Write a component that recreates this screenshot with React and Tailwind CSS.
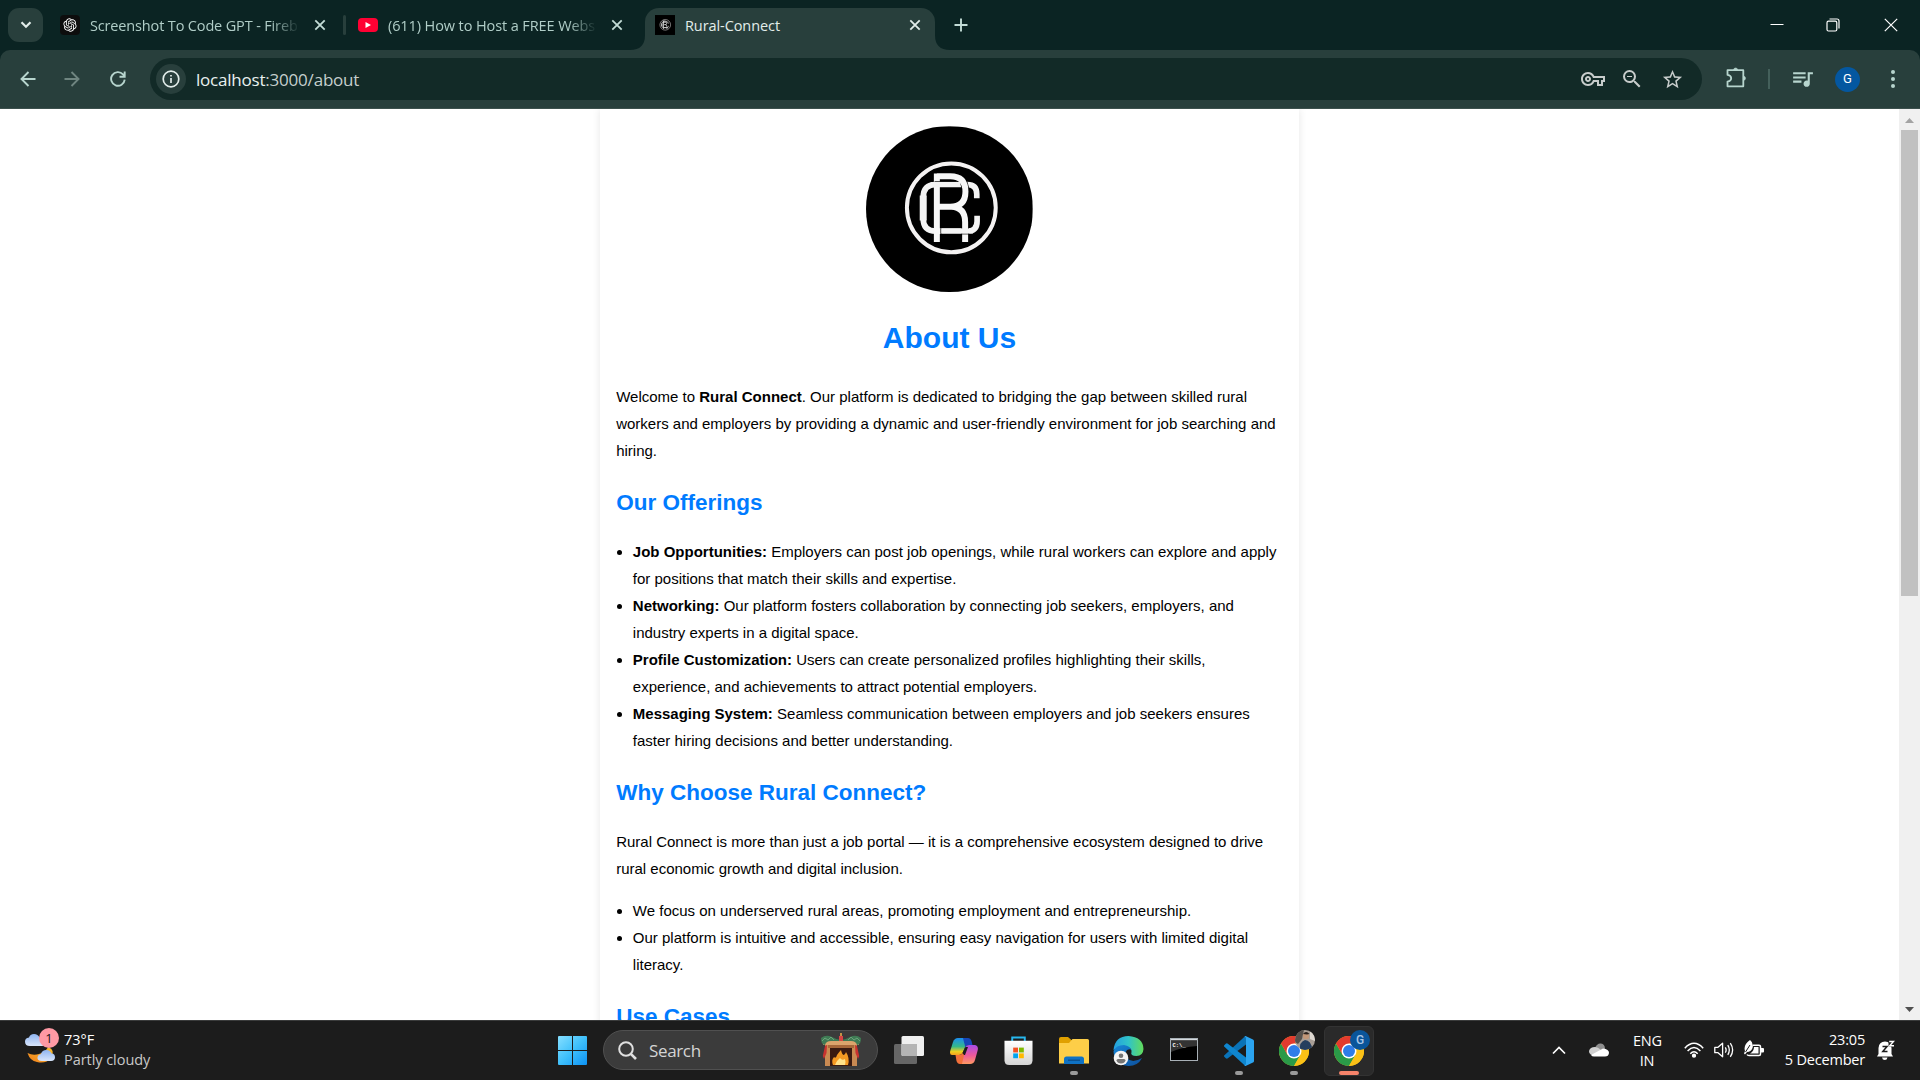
import React from "react";
import { RiOpenaiFill } from "react-icons/ri";
import { MdOutlineVpnKey, MdZoomOut, MdStarBorder, MdQueueMusic } from "react-icons/md";

function Monogram({ className }) {
  return (
    <svg viewBox="78 62 501 499" className={className} fill="none">
      <rect x="78" y="62" width="501" height="499" fill="#000" />
      <circle cx="334.500" cy="307" r="133.500" stroke="#f4f2f2" strokeWidth="12" />
      <path d="M411 278 V266 Q411 237 382 237 H288 Q250 237 250 276 V340 Q250 377 288 377 H382 Q412 377 412 347 V331" stroke="#f4f4f4" strokeWidth="17" />
      <path d="M250 270 V345" stroke="#f4f4f4" strokeWidth="21" />
      <path d="M335 212 Q377 214 377 258 Q377 302 335 304 M340 304 Q376 308 376 350 V410" stroke="#000" strokeWidth="22" />
      <path d="M291 410 V204 M291 212 H331 Q377 212 377 258 Q377 304 331 304 H300 M335 304 Q376 306 376 350 V410" stroke="#f7f7f7" strokeWidth="18" />
      <path d="M284 228.500 H350 M303 368.500 V385.500 H392" stroke="#000" strokeWidth="2.500" />
      <path d="M272 237 H362 M305 377 H400" stroke="#f4f4f4" strokeWidth="15" />
    </svg>
  );
}

function CloseIcon({ color }) {
  return (
    <svg viewBox="0 0 12 12" className="size-3 shrink-0" stroke={color} strokeWidth="1.800">
      <path d="M1.300 1.300 10.700 10.700M10.700 1.300 1.300 10.700" />
    </svg>
  );
}

function TabStrip() {
  return (
    <div className="flex h-[50px] shrink-0 items-start bg-[#0b2423] text-[14.5px] text-[#b0cdc7]">
      <div className="mt-2 ml-2 flex h-[34px] w-[35px] items-center justify-center rounded-[11px] bg-[#283f3c]">
        <svg viewBox="0 0 12 8" className="h-2 w-3" fill="none" stroke="#e2edea" strokeWidth="2.200">
          <path d="M1.500 1.300 6 5.800 10.500 1.300" />
        </svg>
      </div>
      <div className="ml-[17px] flex h-[50px] w-[283px] items-center">
        <span className="flex size-5 shrink-0 items-center justify-center rounded bg-[#0d0d0d] text-[16px] text-white">
          <RiOpenaiFill />
        </span>
        <span className="mt-[2px] ml-[10px] w-[210px] shrink-0 whitespace-nowrap tracking-[-0.15px] [mask-image:linear-gradient(to_right,#000_86%,transparent_100%)]">
          Screenshot To Code GPT - Fireb
        </span>
        <span className="ml-[14px]"><CloseIcon color="#c3dcd6" /></span>
      </div>
      <div className="mt-[15px] h-5 w-[3px] rounded-full bg-[#283f3c]" />
      <div className="ml-3 flex h-[50px] w-[272px] items-center">
        <span className="flex h-[14px] w-5 shrink-0 items-center justify-center rounded-[4px] bg-[#ff0033]">
          <svg viewBox="0 0 6 6" className="size-[6px]" fill="#fff"><path d="M.5 0 6 3 .5 6z" /></svg>
        </span>
        <span className="mt-[2px] ml-[10px] w-[209px] shrink-0 whitespace-nowrap tracking-[-0.1px] [mask-image:linear-gradient(to_right,#000_86%,transparent_100%)]">
          (611) How to Host a FREE Webs
        </span>
        <span className="ml-[14px]"><CloseIcon color="#c3dcd6" /></span>
      </div>
      <div className="flex h-[50px] items-end">
        <svg viewBox="0 0 15 15" className="size-[15px]" fill="#283f3c"><path d="M15 0V15H0Q15 15 15 0z" /></svg>
        <div className="flex h-[42px] w-[290px] items-center rounded-t-[14px] bg-[#283f3c] pb-2 pl-[10px] text-[#e2edea]">
          <Monogram className="size-5" />
          <span className="mt-[2px] ml-[10px] w-[210px] tracking-[-0.08px]">Rural-Connect</span>
          <span className="ml-[14px]"><CloseIcon color="#e2edea" /></span>
        </div>
        <svg viewBox="0 0 15 15" className="size-[15px]" fill="#283f3c"><path d="M0 0V15H15Q0 15 0 0z" /></svg>
      </div>
      <svg viewBox="0 0 14 14" className="mt-[18px] ml-1 size-[14px]" stroke="#c3dcd6" strokeWidth="1.900">
        <path d="M7 .5V13.500M.5 7H13.500" />
      </svg>
      <div className="ml-auto flex h-[50px] items-center pr-[22px]">
        <svg viewBox="0 0 14 14" className="size-[14px]" stroke="#fff"><path d="M.5 6.500H13.500" /></svg>
        <svg viewBox="0 0 14 14" className="ml-[42px] size-[14px]" fill="none" stroke="#fff" strokeWidth="1.200">
          <rect x="1" y="3.200" width="9.800" height="9.800" rx="1.500" />
          <path d="M3.500 1H11a2 2 0 0 1 2 2V10.500" />
        </svg>
        <svg viewBox="0 0 14 14" className="ml-11 size-[14px]" stroke="#fff" strokeWidth="1.200"><path d="M.8.8 13.200 13.200M13.200.8.8 13.200" /></svg>
      </div>
    </div>
  );
}

function Toolbar() {
  return (
    <div className="h-[59px] shrink-0 bg-[#0b2423]">
      <div className="flex h-[59px] items-start rounded-t-[10px] border-b border-[#3c504d] bg-[#283f3c] pt-2">
        <div className="flex h-[42px] w-[150px] shrink-0 items-center pl-5">
          <svg viewBox="0 0 16 16" className="size-4" fill="none" stroke="#b7d5ce" strokeWidth="1.900">
            <path d="M15.500 8H1.500M8.500 1 1.500 8 8.500 15" />
          </svg>
          <svg viewBox="0 0 16 16" className="ml-[28px] size-4" fill="none" stroke="#6f8580" strokeWidth="1.900">
            <path d="M.5 8H14.500M7.500 1 14.500 8 7.500 15" />
          </svg>
          <svg viewBox="0 0 16 16" className="ml-[30px] size-4" fill="none" stroke="#b7d5ce" strokeWidth="1.900">
            <path d="M14.700 8.600A6.800 6.800 0 1 1 13 3.400L14.700 5.300M14.700 .5V5.800H9.500" />
          </svg>
        </div>
        <div className="flex h-[42px] w-[1552px] items-center rounded-full bg-[#122a27] pr-[18px] pl-[6px]">
          <span className="flex size-[30px] items-center justify-center rounded-full bg-[#283f3c]">
            <svg viewBox="0 0 18 18" className="size-[18px]" fill="none" stroke="#e2edea" strokeWidth="1.700">
              <circle cx="9" cy="9" r="7.800" />
              <path d="M9 8V13M9 4.900V6.600" />
            </svg>
          </span>
          <span className="mt-[2px] ml-[10px] text-[17px] tracking-[-0.21px] text-[#c5cfcd]">
            <span className="text-[#e9f1ef]">localhost</span>:3000/about
          </span>
          <span className="ml-auto flex items-center text-[#c7cccb]">
            <MdOutlineVpnKey className="size-[24px]" />
            <MdZoomOut className="ml-[15px] size-[24px]" />
            <MdStarBorder className="ml-[17px] size-[23px]" />
          </span>
        </div>
        <div className="flex h-[42px] items-center">
          <svg viewBox="0 0 21 21" className="mb-1 ml-6 size-[21px]" fill="none" stroke="#b7d5ce" strokeWidth="1.800" strokeLinejoin="round">
            <path d="M1.500 3.200H17.300V19.300H1.500V14.600Q5.200 14 5.200 11.200 5.200 8.500 1.500 7.900z" />
            <path d="M7.600 3a2 2 0 0 1 4 0zM17.500 9.300a2 2 0 0 1 0 4z" fill="#b7d5ce" strokeWidth=".6" />
          </svg>
          <span className="ml-[21px] h-5 w-[2px] bg-[#44605b]" />
          <MdQueueMusic className="mb-[2px] ml-[20px] size-[25px] text-[#b7d5ce]" />
          <span className="ml-[20px] flex size-[25px] items-center justify-center rounded-full bg-[#0457a0] font-[Roboto] text-[13px] text-white">G</span>
          <span className="ml-[31px] flex flex-col gap-[3px]">
            <i className="size-[4px] rounded-full bg-[#b7d5ce]" />
            <i className="size-[4px] rounded-full bg-[#b7d5ce]" />
            <i className="size-[4px] rounded-full bg-[#b7d5ce]" />
          </span>
        </div>
      </div>
    </div>
  );
}

const offerings = [
  ["Job Opportunities:", "Employers can post job openings, while rural workers can explore and apply for positions that match their skills and expertise."],
  ["Networking:", "Our platform fosters collaboration by connecting job seekers, employers, and industry experts in a digital space."],
  ["Profile Customization:", "Users can create personalized profiles highlighting their skills, experience, and achievements to attract potential employers."],
  ["Messaging System:", "Seamless communication between employers and job seekers ensures faster hiring decisions and better understanding."],
];

function Heading({ children }) {
  return <h2 className="mt-[18.8px] mb-[14.54px] text-[22.5px] leading-[40.5px] font-bold text-[#007bff]">{children}</h2>;
}

function Page() {
  return (
    <div className="flex min-h-0 flex-1 bg-white">
      <div className="flex min-w-0 flex-1 justify-center overflow-hidden">
        <main className="h-[1200px] w-[699px] px-[16.17px] pt-[16.67px] font-['Liberation_Sans',Arial,sans-serif] text-[15px] leading-[27px] text-black shadow-[0_0_8px_rgba(0,0,0,0.1)]">
          <Monogram className="mx-auto size-[166.67px] rounded-full" />
          <h1 className="mt-[19px] mb-[18.17px] text-center text-[30px] leading-[54px] font-bold text-[#007bff]">About Us</h1>
          <p>
            Welcome to <b>Rural Connect</b>. Our platform is dedicated to bridging the gap between skilled rural workers and
            employers by providing a dynamic and user-friendly environment for job searching and hiring.
          </p>
          <Heading>Our Offerings</Heading>
          <ul className="list-disc pl-[16.67px]">
            {offerings.map(([name, text]) => (
              <li key={name}><b>{name}</b> {text}</li>
            ))}
          </ul>
          <Heading>Why Choose Rural Connect?</Heading>
          <p className="mb-[15px]">
            Rural Connect is more than just a job portal — it is a comprehensive ecosystem designed to drive rural economic
            growth and digital inclusion.
          </p>
          <ul className="list-disc pl-[16.67px]">
            <li>We focus on underserved rural areas, promoting employment and entrepreneurship.</li>
            <li>Our platform is intuitive and accessible, ensuring easy navigation for users with limited digital literacy.</li>
          </ul>
          <Heading>Use Cases</Heading>
        </main>
      </div>
      <div className="flex w-[21px] shrink-0 flex-col items-center bg-[#f0f0f0]">
        <div className="flex h-[21px] items-center pt-[2px]">
          <svg viewBox="0 0 9 5" className="h-[5px] w-[9px]" fill="#a3a3a3"><path d="M0 5 4.500 0 9 5z" /></svg>
        </div>
        <div className="h-[466px] w-[17px] bg-[#c1c1c1]" />
        <svg viewBox="0 0 9 5" className="mt-auto mb-2 h-[5px] w-[9px]" fill="#505050"><path d="M0 0 4.500 5 9 0z" /></svg>
      </div>
    </div>
  );
}

function Weather() {
  return (
    <div className="flex w-[558px] shrink-0 items-center pl-[25px]">
      <svg viewBox="0 0 34 36" className="mb-[9px] h-9 w-[34px] shrink-0">
        <defs>
          <linearGradient id="cloud" x1="0" y1="0" x2="0" y2="1"><stop stopColor="#8fb4f0" /><stop offset="1" stopColor="#d9e6fb" /></linearGradient>
          <linearGradient id="moon" x1="0" y1="1" x2="1" y2="0"><stop stopColor="#f07f1d" /><stop offset="1" stopColor="#f9c12f" /></linearGradient>
        </defs>
        <path d="M23 19Q31 22 26 30 21 36 12 34 5 33 2.500 25 8 28 14 26 21 24 23 19z" fill="url(#moon)" />
        <path d="M5 18Q0 18 0 13.500 0 10 4 9.500 5 6 9 6 13 6 14.500 9.500 18 9.500 18 18z" fill="url(#cloud)" />
        <path d="M17 33Q12 33 12.500 29 13 26.500 16 26 17 22 21.500 22 25 22 26.500 25.500 30 25.500 30 29.300 30 33 26 33z" fill="url(#cloud)" />
        <circle cx="24" cy="10" r="10" fill="#ff99a4" />
        <text x="24" y="14.800" textAnchor="middle" fontSize="13" fontFamily="Open Sans" fill="#241416">1</text>
      </svg>
      <div className="mb-[1px] ml-[5px] text-[14.5px] leading-5 tracking-[-0.05px] text-white">
        <div>73°F</div>
        <div className="text-[#c9c9c9]">Partly cloudy</div>
      </div>
    </div>
  );
}

function Fireplace() {
  return (
    <svg viewBox="0 0 42 34" className="h-[34px] w-[42px]">
      <path d="M5 10H37V33H5z" fill="#c98a52" />
      <path d="M3 8H39V12H3z" fill="#dca46c" />
      <path d="M10 15H32V33H10z" fill="#3a1a10" />
      <path d="M8 12H34V15H8z" fill="#a8683a" />
      <path d="M13 32Q11 27 14 24 16 26 17 22 19 19 21 17 22 22 24 22 26 20 26 19 30 25 28 32z" fill="#f59a23" />
      <path d="M15 32Q16 28 20 25 22 28 25 26 26 29 25 32z" fill="#ffe28a" />
      <path d="M1 5Q6 1 12 4 17 7 21 7 25 7 30 4 36 1 41 5 41 12 37 12 36 8 31 8H11Q6 8 5 12 1 12 1 5z" fill="#3f7a54" />
      <path d="M2 8 5 5 8 7 11 4 14 7M28 7 31 4 34 7 37 5 40 8" fill="none" stroke="#6aa27a" />
      <path d="M19 3H23V8H19z" fill="#d64545" />
      <path d="M21 0V3" stroke="#f3b04a" strokeWidth="1.500" />
      <path d="M5 13 7 12 6.500 20 4 26 2.800 23zM37 13 35 12 35.500 20 38 26 39.200 23z" fill="#c8322f" />
    </svg>
  );
}

function Chrome() {
  return (
    <svg viewBox="0 0 48 48" className="size-[30px]">
      <circle cx="24" cy="24" r="24" fill="#fbc116" />
      <path d="M24 24 34.400 30 24 48A24 24 0 0 1 3.200 12L13.600 30z" fill="#2a9a48" />
      <path d="M24 12H44.800A24 24 0 0 1 24 48L34.400 30z" fill="#fbc116" />
      <path d="M24 12H44.800A24 24 0 0 0 3.200 12L13.600 30 24 24z" fill="#e33b2e" />
      <circle cx="24" cy="24" r="12" fill="#fff" />
      <circle cx="24" cy="24" r="9.600" fill="#2f7de9" />
    </svg>
  );
}

function AppSlot({ children, dot, active }) {
  return (
    <div className="flex w-[55px] items-center justify-center">
      <div className={active
        ? "relative flex size-[50px] items-center justify-center rounded-md border border-[#333] bg-[#2a2a2a]"
        : "relative flex size-[50px] items-center justify-center"}>
        {children}
        {dot && <span className="absolute bottom-[1px] h-1 w-2 rounded-full bg-[#9a9a9a]" />}
        {active && <span className="absolute bottom-0 h-1 w-5 rounded-full bg-[#f5836a]" />}
      </div>
    </div>
  );
}

function Apps() {
  return (
    <div className="ml-[3.5px] flex">
      <AppSlot>
        <svg viewBox="0 0 30 28" className="mb-[2px] h-7 w-[30px]">
          <rect x="0" y="8" width="23" height="20" rx="1.500" fill="#666" />
          <rect x="7.500" y="0" width="22.500" height="20" rx="1.500" fill="#f0f0f0" />
          <path d="M7.500 8H23V20H9Q7.500 20 7.500 18.500z" fill="#b5b5b5" />
        </svg>
      </AppSlot>
      <AppSlot>
        <svg viewBox="0 0 28 26" className="h-[26px] w-7">
          <defs>
            <linearGradient id="cpa" x1="0" y1="0" x2="0" y2="1"><stop stopColor="#1b8df0" /><stop offset=".5" stopColor="#35b88a" /><stop offset=".8" stopColor="#f0d020" /><stop offset="1" stopColor="#f5a020" /></linearGradient>
            <linearGradient id="cpb" x1="0" y1="0" x2="0" y2="1"><stop stopColor="#a94be8" /><stop offset=".55" stopColor="#ee5a9a" /><stop offset="1" stopColor="#ff9a62" /></linearGradient>
          </defs>
          <path d="M8 0H18L15.500 8 12.500 15Q11.500 17 9 17H2Q-1 17 .5 12L3 4Q4.500 0 8 0z" fill="url(#cpa)" />
          <path d="M13 0H18Q20.500 0 21.500 3L22.500 7H19Q16.500 7 15.500 10z" fill="#1647b8" />
          <path d="M20 26H10L12.500 17 15.500 9Q16.500 7 19 7H25Q29 8 27.500 13L25 22Q24 26 20 26z" fill="url(#cpb)" />
          <path d="M12.500 15 15.500 9H18L15 17H12z" fill="#1c1c1c" />
          <path d="M12 26H10Q7.500 26 6.500 23L5.500 17H9Q11.500 17 12.500 15L14 17z" fill="#f2703a" />
        </svg>
      </AppSlot>
      <AppSlot>
        <svg viewBox="0 0 30 30" className="mr-[1px] size-[29px]">
          <defs><linearGradient id="bag" x1="0" y1="0" x2="0" y2="1"><stop stopColor="#fff" /><stop offset="1" stopColor="#d4d4d4" /></linearGradient></defs>
          <path d="M8.500 6V1.500H21.500V6" fill="none" stroke="#27b7ee" strokeWidth="2" />
          <path d="M.5 5H29.500V25Q29.500 30 24.500 30H5.500Q.5 30 .5 25z" fill="url(#bag)" />
          <path d="M9.500 12H14.500V17H9.500z" fill="#f25022" /><path d="M15.500 12H20.500V17H15.500z" fill="#7fba00" />
          <path d="M9.500 18H14.500V23H9.500z" fill="#00a4ef" /><path d="M15.500 18H20.500V23H15.500z" fill="#ffb900" />
        </svg>
      </AppSlot>
      <AppSlot dot>
        <svg viewBox="0 0 30 27" className="h-[27px] w-[30px]">
          <path d="M0 2Q0 0 2 0H9L13 3.500V9H0z" fill="#e0a000" />
          <path d="M0 6H10L13.500 2H28.500Q30 2 30 3.500V26.500H0z" fill="#fdce48" />
          <path d="M5 27V22Q5 19.500 7.500 19.500H22.500Q25 19.500 25 22V27z" fill="#0f72c4" />
          <path d="M9 23.200H21" stroke="#0a4a86" strokeWidth="1.200" />
        </svg>
      </AppSlot>
      <AppSlot>
        <svg viewBox="0 0 31 30" className="mr-[1px] h-[30px] w-[31px]">
          <defs>
            <linearGradient id="ea" x1="0" y1="0" x2="1" y2="0"><stop stopColor="#239ee0" /><stop offset=".5" stopColor="#30c3c8" /><stop offset="1" stopColor="#63dc5a" /></linearGradient>
            <linearGradient id="eb" x1="0" y1="0" x2="1" y2="1"><stop stopColor="#1787d8" /><stop offset="1" stopColor="#0d4f9c" /></linearGradient>
          </defs>
          <path d="M.5 14Q2 0 15.500 0 30 1 30.500 13 30 20 23.500 20 17 20 18.500 16 19 12 14 11 6 11 .5 14z" fill="url(#ea)" />
          <path d="M.5 15Q3 9 11 9 17 10 18.500 14 17 12.500 14 14 11 17 14 22 19 28 29 22 25 30 15.500 30 1 29 .5 15z" fill="url(#eb)" />
          <circle cx="8" cy="22" r="7.300" fill="#f4f4f4" />
          <circle cx="8" cy="19.800" r="2.300" fill="#757575" />
          <path d="M3.500 24.500Q3.500 23 5 23H11Q12.500 23 12.500 24.500 11.500 27.500 8 27.500 4.500 27.500 3.500 24.500z" fill="#757575" />
        </svg>
      </AppSlot>
      <AppSlot>
        <svg viewBox="0 0 28 23" className="mr-[1px] mb-[2px] h-[23px] w-7">
          <rect x=".5" y=".5" width="27" height="22" fill="#000" stroke="#a8b0b6" />
          <path d="M1 1H27V2.500H1z" fill="#d5dade" />
          <path d="M1 2.500H27V8Q12 9 1 14z" fill="#333" />
          <text x="2.500" y="8.500" fontSize="5.500" fontFamily="Liberation Mono" fontWeight="bold" fill="#fff">C:\_</text>
        </svg>
      </AppSlot>
      <AppSlot dot>
        <svg viewBox="0 0 30 30" className="size-[30px]">
          <path d="M22 0 22 8.500 3.500 22.500Q2.500 23 1.500 22L.3 20.800Q-.4 20 .4 19.200L20.500.8z" fill="#0a73b8" />
          <path d="M22 30 22 21.500 3.500 7.500Q2.500 7 1.500 8L.3 9.200Q-.4 10 .4 10.800L20.500 29.200z" fill="#0f86cf" />
          <path d="M21.500 0 29 3.400Q30 4 30 5V25Q30 26 29 26.600L21.500 30Q20.500 29.800 20.300 29.200 22 29.500 22 27.500V2.500Q22 .5 20.300.8z" fill="#2ba4f0" />
        </svg>
      </AppSlot>
      <AppSlot dot>
        <Chrome />
        <svg viewBox="0 0 20 20" className="absolute top-[4px] left-[26px] size-5 rounded-full">
          <rect width="20" height="20" fill="#a99f96" />
          <path d="M0 0H9L7 9 3 14 0 12z" fill="#55504c" />
          <circle cx="11" cy="6" r="3.200" fill="#c29778" />
          <path d="M8 4Q11 0 14.500 4L12 4.500z" fill="#2b211c" />
          <path d="M5 20Q4 12 10 10 16 10 17.500 20z" fill="#263f5e" />
          <path d="M15 0H20V11L15 9z" fill="#ddd7d0" />
        </svg>
      </AppSlot>
      <AppSlot active>
        <Chrome />
        <span className="absolute top-[3px] left-[25px] flex size-5 items-center justify-center rounded-full bg-[#0a559a] font-[Roboto] text-[12px] font-medium text-[#a9c6e6]">G</span>
      </AppSlot>
    </div>
  );
}

function Tray() {
  return (
    <div className="ml-auto flex items-center pr-[25px] text-[14.5px] leading-5 tracking-[-0.2px] text-white">
      <svg viewBox="0 0 14 9" className="h-[9px] w-[14px]" fill="none" stroke="#fff" strokeWidth="1.700"><path d="M1 7.500 7 1.500 13 7.500" /></svg>
      <svg viewBox="0 0 20 14" className="mb-[2px] ml-[23px] h-[14px] w-5">
        <path d="M6 5Q8 0 12 .5 16 1 16 6L12 9z" fill="#8e8e8e" />
        <path d="M3 12Q0 11 0 8 1 4 6 4 9 4 12 7L8 12z" fill="#d0d0d0" />
        <path d="M2 12 14 5.500Q20 6 20 10 19.500 13.500 16 13.500H5Q3 13.500 2 12z" fill="#fff" />
      </svg>
      <div className="mt-[1px] ml-6 w-[28px] text-center"><div>ENG</div><div>IN</div></div>
      <svg viewBox="0 0 20 16" className="mb-[2px] ml-[23px] h-4 w-5" fill="none" stroke="#fff" strokeWidth="1.500">
        <path d="M.8 6.200Q10-3.500 19.200 6.200M3.600 9Q10 2.200 16.400 9M6.300 11.700Q10 7.800 13.700 11.700" />
        <circle cx="10" cy="13.700" r="1.400" fill="#fff" />
      </svg>
      <svg viewBox="0 0 20 16" className="mb-[1px] ml-[10px] h-4 w-5" fill="none" stroke="#fff" strokeWidth="1.300" strokeLinejoin="round">
        <path d="M.8 5.300H4L8.600 1.200V14.800L4 10.700H.8zM11.300 5.300Q13 8 11.300 10.700M13.800 3.200Q16.800 8 13.800 12.800M16.300 1.200Q21 8 16.300 14.800" />
      </svg>
      <svg viewBox="0 0 20 17" className="mb-1 ml-[10px] h-[17px] w-5">
        <path d="M9 5.200H15Q16.500 5.200 16.500 6.700V14Q16.500 15.500 15 15.500H5Q3.500 15.500 3 14.500" fill="none" stroke="#fff" strokeWidth="1.500" />
        <path d="M17 8H19Q20 8 20 9V11.500Q20 12.500 19 12.500H17z" fill="#fff" />
        <path d="M6 0Q10 3 8.500 8 7 12 3 12L1 14.500 0 13.500 1 11Q-1 5 6 0z" fill="#fff" />
        <path d="M10 7H14.500V13.500H6Q10 11 10 7z" fill="#fff" />
        <path d="M1.500 12 6 5" stroke="#1c1c1c" />
      </svg>
      <div className="mb-[1px] ml-[19px] w-[82px] text-right whitespace-nowrap"><div>23:05</div><div>5 December</div></div>
      <svg viewBox="0 0 18 20" className="mb-[2px] ml-3 h-5 w-[18px]">
        <path d="M1.500 14V8Q2 1.500 8 1.500 14 1.500 14.500 8V14L16 16.500H0z" fill="#fff" />
        <path d="M5 17.500H10.500Q10 20 7.800 20 5.500 20 5 17.500z" fill="#fff" />
        <path d="M11.500 .5H17.500V6.500H11.500z" fill="#1c1c1c" />
        <path d="M5.500 6.500H10L5.800 11.500H10.500" fill="none" stroke="#1c1c1c" strokeWidth="1.500" />
        <path d="M12.200 1.500H16.500L12.700 5.800H17" fill="none" stroke="#fff" strokeWidth="1.400" />
      </svg>
    </div>
  );
}

function Taskbar() {
  return (
    <div className="flex h-[60px] shrink-0 border-t border-[#3a3b3b] bg-[#1c1c1c]">
      <Weather />
      <svg viewBox="0 0 29 29" className="mt-[15px] size-[29px]">
        <defs><linearGradient id="win" gradientUnits="userSpaceOnUse" x1="0" y1="0" x2="29" y2="29"><stop stopColor="#86dfff" /><stop offset=".5" stopColor="#3fc0fb" /><stop offset="1" stopColor="#0d92f4" /></linearGradient></defs>
        <path d="M0 1Q0 0 1 0H14V14H0zM15 0H28Q29 0 29 1V14H15zM0 15H14V29H1Q0 29 0 28zM15 15H29V28Q29 29 28 29H15z" fill="url(#win)" />
      </svg>
      <div className="mt-[9px] ml-4 flex h-10 w-[275px] items-center rounded-full border border-[#505050] bg-[#3b3b3b] pr-[15px] pl-[14px]">
        <svg viewBox="0 0 19 19" className="size-[19px]" fill="none" stroke="#e0e0e0" strokeWidth="2">
          <circle cx="8" cy="8" r="6.800" /><path d="M12.800 12.800 18 18" strokeWidth="2.600" />
        </svg>
        <span className="mt-[1px] ml-3 text-[17px] tracking-[-0.35px] text-[#d4d4d4]">Search</span>
        <span className="ml-auto"><Fireplace /></span>
      </div>
      <Apps />
      <Tray />
    </div>
  );
}

export default function App() {
  return (
    <div className="flex h-[1080px] w-[1920px] flex-col overflow-hidden font-['Open_Sans','Noto_Sans',sans-serif]">
      <TabStrip />
      <Toolbar />
      <Page />
      <Taskbar />
    </div>
  );
}
